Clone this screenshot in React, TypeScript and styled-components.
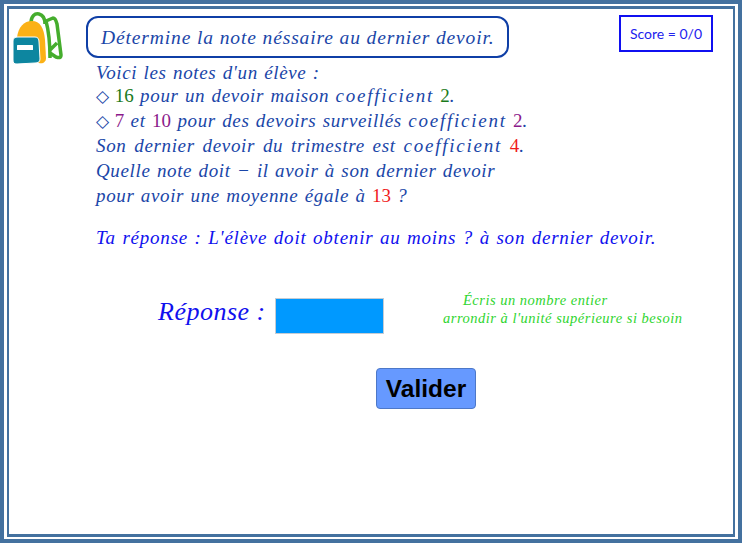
import React from 'react';
import styled, { createGlobalStyle } from 'styled-components';

const Global = createGlobalStyle`
  html, body {
    margin: 0;
    padding: 0;
    background: #fff;
  }
`;

const OuterFrame = styled.div`
  box-sizing: border-box;
  width: 742px;
  height: 543px;
  border: 4px solid #44719f;
  padding: 2px 3px;
  overflow: hidden;
`;

const InnerFrame = styled.div`
  box-sizing: border-box;
  height: 100%;
  border: 3px solid #44719f;
  border-width: 3px 2px;
  padding: 3px 4px 0;
  font-family: 'Liberation Serif', 'Times New Roman', serif;
  display: flex;
  flex-direction: column;
`;

const Top = styled.div`
  display: flex;
  gap: 23px;
`;

const Main = styled.div`
  flex: 1;
  min-width: 0;
`;

const Header = styled.div`
  display: flex;
  align-items: flex-start;
`;

const TitleBox = styled.div`
  box-sizing: border-box;
  width: 423px;
  height: 42px;
  margin-top: 4px;
  border: 2px solid #0f3fa6;
  border-radius: 12px;
  padding-left: 13px;
  font-size: 19.5px;
  font-style: italic;
  line-height: 40px;
  letter-spacing: 0.88px;
  color: #1a46a8;
  white-space: nowrap;
`;

const ScoreBox = styled.div`
  box-sizing: border-box;
  width: 94px;
  height: 37px;
  margin: 3px 0 0 110px;
  border: 2px solid #1010f0;
  font-family: 'Lato', 'Liberation Sans', sans-serif;
  font-size: 14px;
  line-height: 33px;
  text-align: center;
  color: #2222ee;
`;

const Statement = styled.div`
  margin-top: 4px;
  padding-left: 10px;
`;

const Line = styled.div<{ $color?: string; $wordGap?: number }>`
  font-size: 19px;
  font-style: italic;
  line-height: 25px;
  letter-spacing: 0.64px;
  word-spacing: ${(p) => p.$wordGap ?? 1}px;
  white-space: nowrap;
  color: ${(p) => p.$color || '#1a46a8'};
`;

const Intro = styled(Line)`
  line-height: 21px;
`;

const Answer = styled(Line)`
  margin-top: 17px;
  letter-spacing: 0.78px;
`;

const Num = styled.span<{ $color: string }>`
  font-style: normal;
  letter-spacing: 0;
  color: ${(p) => p.$color};
`;

const Spaced = styled.span`
  letter-spacing: 1.75px;
`;

const Diamond = styled.span`
  font-family: 'DejaVu Sans', sans-serif;
  font-style: normal;
  font-size: 17px;
  line-height: 0;
  margin-right: 5px;
`;

const ResponseRow = styled.div`
  display: flex;
  align-items: center;
  margin: 41px 0 0 145px;
`;

const ResponseLabel = styled.div`
  width: 117px;
  font-size: 26px;
  font-style: italic;
  letter-spacing: 0.5px;
  color: #1010ee;
  white-space: nowrap;
  margin-bottom: 8px;
`;

const AnswerInput = styled.input`
  box-sizing: border-box;
  width: 109px;
  height: 36px;
  padding: 0;
  border: 1px solid #c4ccd4;
  border-radius: 0;
  background: #0099ff;
  outline: none;
`;

const Hint = styled.div`
  margin: 0 0 13px 59px;
  font-size: 14.5px;
  font-style: italic;
  line-height: 18px;
  letter-spacing: 0.5px;
  color: #2fd52f;
  white-space: nowrap;
`;

const HintFirst = styled.div`
  padding-left: 20px;
`;

const Submit = styled.button`
  box-sizing: border-box;
  width: 100px;
  height: 41px;
  margin: 28px 0 0 363px;
  padding: 0;
  border: 1px solid #4d78c8;
  border-radius: 4px;
  background: #6699ff;
  font-family: 'Liberation Sans', Arial, sans-serif;
  font-size: 24.5px;
  font-weight: 700;
  color: #000;
`;

const BackpackIcon = () => (
  <svg width="50" height="56" viewBox="0 0 50 56" style={{ flexShrink: 0 }}>
    <path
      d="M18 11 C18 4 22 1 26 2 C30 3 32 7 32 12"
      fill="none"
      stroke="#45ad2d"
      strokeWidth="3.5"
    />
    <path
      d="M33 9 L40 6 C42 6 43 8 44 12 L48 43 C48 46 46 46 43 45 L37 41 M33 9 C36 20 37 34 37 46 M37 38 L44 31"
      fill="none"
      stroke="#45ad2d"
      strokeWidth="3.5"
      strokeLinejoin="round"
    />
    <path
      d="M4 26 C5 15 11 9 19 9 C27 9 31 16 32 28 L33 46 C33 50 30 52 26 51 L4 30 Z"
      fill="#fbb116"
    />
    <path
      d="M0 29 C0 26 2 25 5 25 L22 25 C25 25 26 27 26 30 L27 47 C27 50 25 51 22 51 L4 52 C1 52 0 51 0 48 Z"
      fill="#0d86a0"
      stroke="#fff"
      strokeWidth="1"
    />
    <rect x="4" y="33" width="16" height="5" rx="0.5" fill="#fff" />
  </svg>
);

const App = () => {
  return (
    <>
      <Global />
      <OuterFrame>
        <InnerFrame>
          <Top>
            <BackpackIcon />
            <Main>
              <Header>
                <TitleBox>Détermine la note néssaire au dernier devoir.</TitleBox>
                <ScoreBox>Score = 0/0</ScoreBox>
              </Header>
              <Statement>
                <Intro>Voici les notes d'un élève :</Intro>
                <Line>
                  <Diamond>◇</Diamond>
                  <Num $color="#1b7a1b">16</Num> pour un devoir maison <Spaced>coefficient</Spaced>{' '}
                  <Num $color="#1b7a1b">2</Num>.
                </Line>
                <Line>
                  <Diamond>◇</Diamond>
                  <Num $color="#8b1a8b">7</Num> et <Num $color="#8b1a8b">10</Num> pour des
                  devoirs surveillés <Spaced>coefficient</Spaced> <Num $color="#8b1a8b">2</Num>.
                </Line>
                <Line $wordGap={2.5}>
                  Son dernier devoir du trimestre est <Spaced>coefficient</Spaced>{' '}
                  <Num $color="#f01c1c">4</Num>.
                </Line>
                <Line>Quelle note doit − il avoir à son dernier devoir</Line>
                <Line>
                  pour avoir une moyenne égale à <Num $color="#f01c1c">13</Num> ?
                </Line>
                <Answer $color="#1010ee">
                  Ta réponse : L'élève doit obtenir au moins ? à son dernier devoir.
                </Answer>
              </Statement>
            </Main>
          </Top>
          <ResponseRow>
            <ResponseLabel>Réponse :</ResponseLabel>
            <AnswerInput type="text" aria-label="Réponse" />
            <Hint>
              <HintFirst>Écris un nombre entier</HintFirst>
              arrondir à l'unité supérieure si besoin
            </Hint>
          </ResponseRow>
          <Submit type="button">Valider</Submit>
        </InnerFrame>
      </OuterFrame>
    </>
  );
};

export default App;
